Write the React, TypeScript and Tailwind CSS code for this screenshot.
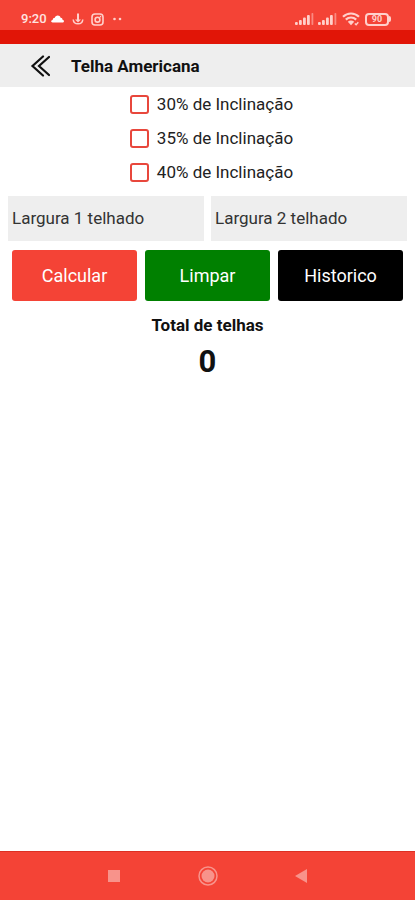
import React, { useState } from 'react'

const slopes = ['30%', '35%', '40%']

const Signal = () => (
  <svg width="19" height="12" viewBox="0 0 19 12" fill="currentColor" aria-hidden="true">
    <rect x="0" y="9" width="2.800" height="3" rx="1" />
    <rect x="4" y="7" width="2.800" height="5" rx="1" />
    <rect x="8" y="4.500" width="2.800" height="7.500" rx="1" />
    <rect x="12" y="2" width="2.800" height="10" rx="1" />
    <rect x="16.500" y="0" width="1.800" height="12" rx="0.700" opacity="0.500" />
  </svg>
)

const StatusBar = () => (
  <div className="flex h-[30px] items-center justify-between bg-[#f44336] pt-2 pr-6 pl-[21px] text-[#ffd0cb]">
    <div className="flex items-center">
      <span className="text-[13px] leading-4 font-medium text-[#ffe4e0]">9:20</span>
      <svg className="ml-1 text-white" width="13" height="8" viewBox="0 0 13 8" fill="currentColor" aria-hidden="true">
        <path d="M1.600 7.500C-.2 7.500-.4 5.300 1.600 4.900 2 3.200 3 3 3.600 3.100 4.300-.4 9-.4 9.600 2.700c1.400 0 1.900.9 1.900 2 2 .4 1.800 2.800.2 2.800z" />
      </svg>
      <svg className="ml-2" width="12" height="12" viewBox="0 0 12 12" fill="none" stroke="currentColor" strokeWidth="1.500" aria-hidden="true">
        <path d="M6 .5v7" strokeWidth="2" />
        <path d="M1.200 6.500c.4 5.800 9.200 5.800 9.600 0" />
        <path d="M3 6.500h6L6 9.500z" fill="currentColor" stroke="none" />
      </svg>
      <svg className="ml-[7px]" width="13" height="13" viewBox="0 0 13 13" fill="none" stroke="currentColor" strokeWidth="1.600" aria-hidden="true">
        <rect x="1" y="1" width="11" height="11" rx="3" />
        <circle cx="6.500" cy="6.700" r="2.400" />
        <path d="M8.800 3.600h1.400" />
      </svg>
      <svg className="ml-[8px]" width="11" height="4" viewBox="0 0 11 4" fill="currentColor" aria-hidden="true">
        <circle cx="2.500" cy="2" r="1.300" />
        <circle cx="8" cy="2" r="1.300" />
      </svg>
    </div>
    <div className="flex items-center">
      <Signal />
      <span className="ml-[4px]"><Signal /></span>
      <svg className="ml-[5px]" width="18" height="14" viewBox="0 0 18 14" fill="none" stroke="currentColor" strokeWidth="2.200" aria-hidden="true">
        <path d="M1 4.700C5.500.4 12.500.4 17 4.700M3.800 7.600c3-2.800 7.400-2.800 10.400 0" />
        <path d="M5.800 9.800c1.800-1.600 4.600-1.600 6.400 0L9 13.200z" fill="currentColor" stroke="none" />
        <path d="M12.800 11.600l1.300 1.200 2.200-2.600" strokeWidth="1.400" />
      </svg>
      <div className="ml-[5px] flex items-center">
        <div className="flex h-[13px] w-[24px] items-center justify-center rounded-[4px] border-2 border-current text-[9px] leading-none font-bold">
          90
        </div>
        <div className="h-[6px] w-[2px] rounded-r-sm bg-current" />
      </div>
    </div>
  </div>
)

const Header = () => (
  <header className="flex h-[43px] items-center bg-[#eeeeee] pl-[30px]">
    <button type="button" aria-label="Voltar" className="text-[#111]">
      <svg width="20" height="22" viewBox="0 0 20 22" fill="none" stroke="currentColor" strokeWidth="2.200" strokeLinecap="round" aria-hidden="true">
        <path d="M13 1.500L2.500 11l10.500 9.500M19 2L9 11l10 9" />
      </svg>
    </button>
    <h1 className="ml-[21px] text-[17px] leading-6 font-bold text-[#111]">Telha Americana</h1>
  </header>
)

const NavBar = () => (
  <nav className="flex h-[49px] items-center justify-center gap-[77px] border-t border-[#dc3024] bg-[#f44336] text-[#f8938b]">
    <button type="button" aria-label="Recentes">
      <svg width="14" height="14" viewBox="0 0 14 14" fill="currentColor" aria-hidden="true">
        <rect x="1" y="1" width="12" height="12" />
      </svg>
    </button>
    <button type="button" aria-label="Início">
      <svg width="20" height="20" viewBox="0 0 20 20" aria-hidden="true">
        <circle cx="10" cy="10" r="9" fill="none" stroke="currentColor" strokeWidth="1.500" />
        <circle cx="10" cy="10" r="6.500" fill="currentColor" />
      </svg>
    </button>
    <button type="button" aria-label="Voltar à tela anterior">
      <svg width="14" height="14" viewBox="0 0 14 14" fill="currentColor" aria-hidden="true">
        <path d="M12 0v14L0 7z" />
      </svg>
    </button>
  </nav>
)

const App = () => {
  const [slope, setSlope] = useState('')
  const [width1, setWidth1] = useState('')
  const [width2, setWidth2] = useState('')

  const clear = () => {
    setSlope('')
    setWidth1('')
    setWidth2('')
  }

  return (
    <div className="flex min-h-screen flex-col bg-white font-['Roboto','Liberation_Sans',sans-serif] text-[#222]">
      <StatusBar />
      <div className="h-[14px] bg-[#e11507]" />
      <Header />

      <main className="flex-1">
        <div className="flex flex-col items-center pl-2">
          {slopes.map((s) => (
            <label key={s} className="flex h-[34px] items-center gap-2 text-[17px] leading-6">
              <input
                type="checkbox"
                checked={slope === s}
                onChange={() => setSlope(slope === s ? '' : s)}
                className="size-[19px] appearance-none rounded-[3px] border-2 border-[#e8473c] bg-white checked:bg-[#f44336]"
              />
              {s} de Inclinação
            </label>
          ))}
        </div>

        <div className="mt-[7px] grid grid-cols-2 gap-[7px] px-2">
          <input
            type="text"
            aria-label="Largura 1 telhado"
            placeholder="Largura 1 telhado"
            value={width1}
            onChange={(e) => setWidth1(e.target.value)}
            className="h-[45px] w-full bg-[#eeeeee] px-1 pb-0.5 text-[17px] placeholder:text-[#333]"
          />
          <input
            type="text"
            aria-label="Largura 2 telhado"
            placeholder="Largura 2 telhado"
            value={width2}
            onChange={(e) => setWidth2(e.target.value)}
            className="h-[45px] w-full bg-[#eeeeee] px-1 pb-0.5 text-[17px] placeholder:text-[#333]"
          />
        </div>

        <div className="mt-[9px] grid grid-cols-3 gap-2 px-3 text-[18px] text-white">
          <button type="button" className="h-[51px] rounded-[3px] bg-[#f44336]">Calcular</button>
          <button type="button" onClick={clear} className="h-[51px] rounded-[3px] bg-[#008000]">Limpar</button>
          <button type="button" className="h-[51px] rounded-[3px] bg-black">Historico</button>
        </div>

        <div className="mt-3 text-center font-bold text-[#111]">
          <h2 className="text-[17px] leading-6">Total de telhas</h2>
          <p className="mt-[5px] text-[31px] leading-10">0</p>
        </div>
      </main>

      <NavBar />
    </div>
  )
}

export default App
